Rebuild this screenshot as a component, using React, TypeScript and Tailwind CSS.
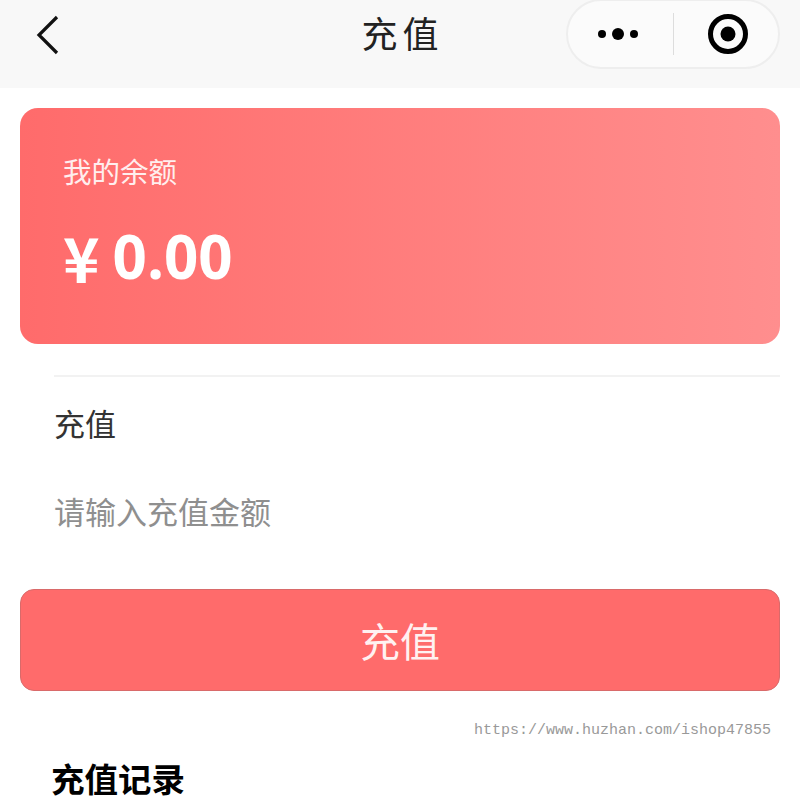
export default function App() {
  const cjk = "font-['Noto_Sans_CJK_SC','Liberation_Sans',sans-serif]";
  return (
    <div className={`w-[800px] h-[800px] overflow-hidden bg-white flex flex-col ${cjk}`}>
      <header className="h-[88px] shrink-0 bg-[#f8f8f8] grid grid-cols-3 items-start">
        <div className="pl-[34px] pt-[14px]">
          <svg width="28" height="42" viewBox="0 0 28 42" fill="none">
            <path d="M23 3 L5 21 L23 39" stroke="#111" strokeWidth="3.2" />
          </svg>
        </div>
        <div className="pt-[7px] text-center pl-[5px] text-[36px] leading-[50px] tracking-[5px] text-[#222] font-normal">充值</div>
        <div className="flex justify-end pr-[20px]">
          <div className="w-[214px] h-[70px] -mt-px rounded-full bg-[#fbfbfb] border-2 border-[#eeeeee] flex items-center">
            <div className="w-[105px] pl-[30px] flex items-center gap-[6px]">
              <span className="w-[8px] h-[8px] rounded-full bg-black" />
              <span className="w-[12px] h-[12px] rounded-full bg-black" />
              <span className="w-[8px] h-[8px] rounded-full bg-black" />
            </div>
            <div className="w-px h-[42px] bg-[#dddddd]" />
            <div className="flex-1 flex justify-center pl-[4px]">
              <svg width="42" height="42" viewBox="0 0 42 42">
                <circle cx="21" cy="21" r="17.5" fill="none" stroke="#000" strokeWidth="5" />
                <circle cx="21" cy="21" r="7.5" fill="#000" />
              </svg>
            </div>
          </div>
        </div>
      </header>

      <main className="flex-1 px-[20px] pt-[20px]">
        <section className="h-[236px] rounded-[18px] bg-gradient-to-r from-[#ff6b6b] to-[#ff8e8e] pl-[43px] pt-[42px] text-white">
          <div className="text-[28.5px] leading-[42px] text-[#ffeeee]">我的余额</div>
          <div className="mt-[26px] text-[60px] leading-[76px] font-bold flex items-center font-['Open_Sans','Noto_Sans_CJK_SC',sans-serif]">
            <span className="mr-[13px] text-[62px] font-bold font-['Noto_Sans_CJK_SC',sans-serif]">¥</span>
            <span>0.00</span>
          </div>
        </section>

        <div className="ml-[34px] mt-[31px] border-t-2 border-[#f2f2f2] pt-[23px]">
          <div className="text-[31px] leading-[46px] text-[#333333]">充值</div>
          <div className="mt-[42px] text-[31px] leading-[46px] text-[#8f8f8f]">请输入充值金额</div>
        </div>

        <button className="mt-[55px] w-full h-[102px] rounded-[14px] bg-[#ff6b6b] border border-[#d96a6a] text-[40px] text-[#fff1f1] flex items-center justify-center">
          充值
        </button>

        <div className="mt-[29px] text-right pr-[9px] text-[15px] leading-[22px] text-[#999999] font-['Liberation_Mono',monospace]">
          https://www.huzhan.com/ishop47855
        </div>

        <h2 className="mt-[18px] pl-[31px] text-[33.5px] leading-[36px] font-bold text-black">充值记录</h2>
      </main>
    </div>
  );
}
